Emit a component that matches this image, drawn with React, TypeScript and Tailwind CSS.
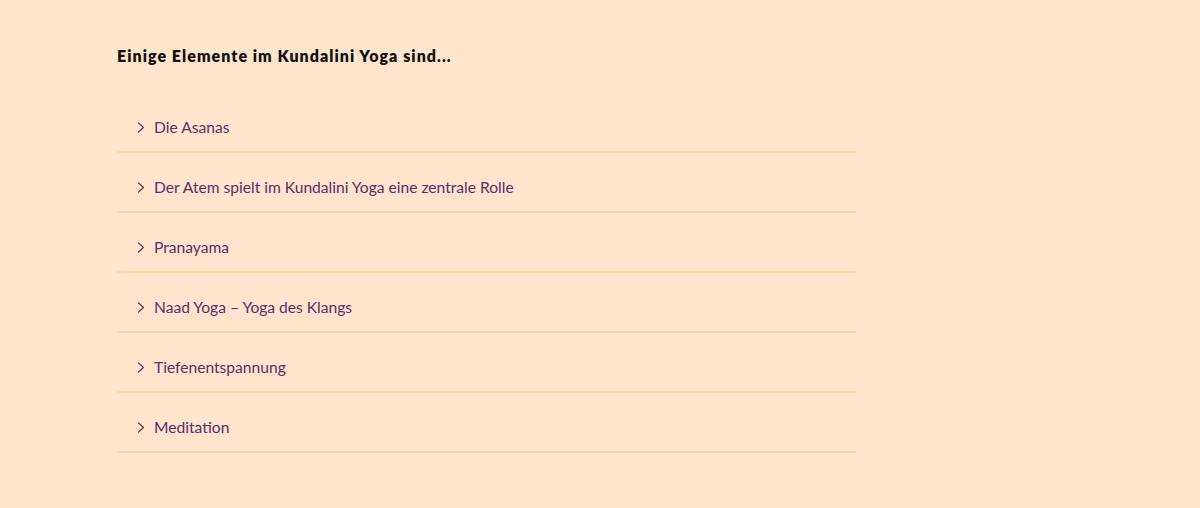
const ITEMS = [
  "Die Asanas",
  "Der Atem spielt im Kundalini Yoga eine zentrale Rolle",
  "Pranayama",
  "Naad Yoga – Yoga des Klangs",
  "Tiefenentspannung",
  "Meditation",
];

function Chevron() {
  return (
    <svg width="8" height="11" viewBox="0 0 8 11" fill="none" className="shrink-0" aria-hidden>
      <path d="M1.5 1 L6.5 5.5 L1.5 10" stroke="#5a3a63" strokeWidth="1.2" strokeLinecap="round" strokeLinejoin="round" />
    </svg>
  );
}

export default function App() {
  return (
    <div
      className="min-h-[508px] w-full bg-[#fee5cc] pt-[44px] pl-[117px]"
      style={{ fontFamily: "Lato, 'Noto Sans', sans-serif" }}
    >
      <div className="w-[739px]">
        <h2 className="text-[16px] font-extrabold leading-6 tracking-[0.065em] text-[#111111]">
          Einige Elemente im Kundalini Yoga sind...
        </h2>
        <ul className="mt-[25px] flex flex-col">
          {ITEMS.map((label) => (
            <li
              key={label}
              className="flex items-center gap-[9px] border-b-2 border-[#f8d7ab] pl-[20px] pt-[22px] pb-[12px] h-[60px]"
            >
              <Chevron />
              <span className="text-[15.6px] leading-6 text-[#5c2f6b]">{label}</span>
            </li>
          ))}
        </ul>
      </div>
    </div>
  );
}
